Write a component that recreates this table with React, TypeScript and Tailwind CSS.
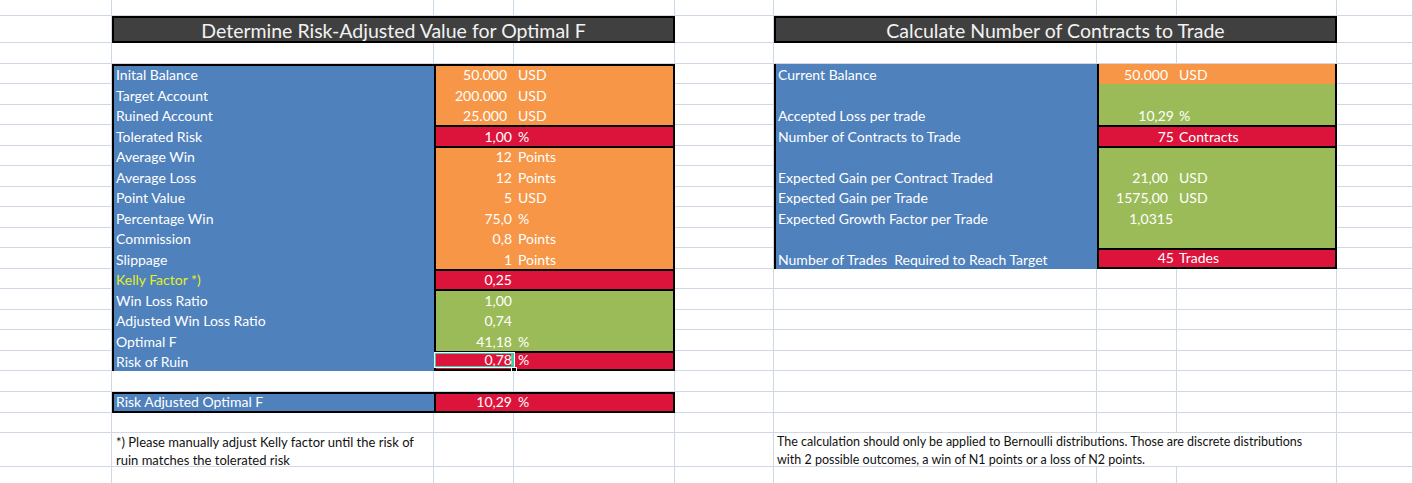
import React from 'react'

// sheet geometry: 9 columns, 23 rows (row heights taken from the screenshot)
const COLS = 9
const ROWS = 23

type Cell = [string, string, string?]

interface Group {
  bg: string
  span: string
  border: string
  rows: Cell[]
  selected?: boolean
}

const leftLabels = [
  'Inital Balance',
  'Target Account',
  'Ruined Account',
  'Tolerated Risk',
  'Average Win',
  'Average Loss',
  'Point Value',
  'Percentage Win',
  'Commission',
  'Slippage',
  'Kelly Factor *)',
  'Win Loss Ratio',
  'Adjusted Win Loss Ratio',
  'Optimal F',
  'Risk of Ruin',
]

const leftGroups: Group[] = [
  {
    bg: 'bg-[#f79646]',
    span: 'row-span-3',
    border: 'border-t-2',
    rows: [
      ['50.000', 'USD', 'pr-[5px]'],
      ['200.000', 'USD', 'pr-[5px]'],
      ['25.000', 'USD', 'pr-[5px]'],
    ],
  },
  { bg: 'bg-[#dc143c]', span: 'row-span-1', border: 'border-t-2', rows: [['1,00', '%']] },
  {
    bg: 'bg-[#f79646]',
    span: 'row-span-6',
    border: 'border-t-2',
    rows: [
      ['12', 'Points'],
      ['12', 'Points'],
      ['5', 'USD'],
      ['75,0', '%'],
      ['0,8', 'Points'],
      ['1', 'Points'],
    ],
  },
  { bg: 'bg-[#dc143c]', span: 'row-span-1', border: 'border-t-2', rows: [['0,25', '']] },
  {
    bg: 'bg-[#9bbb59]',
    span: 'row-span-3',
    border: 'border-t-2',
    rows: [
      ['1,00', ''],
      ['0,74', ''],
      ['41,18', '%'],
    ],
  },
  { bg: 'bg-[#dc143c]', span: 'row-span-1', border: 'border-t-2', rows: [['0,78', '%']], selected: true },
]

const rightLabels = [
  'Current Balance',
  '',
  'Accepted Loss per trade',
  'Number of Contracts to Trade',
  '',
  'Expected Gain per Contract Traded',
  'Expected Gain per Trade',
  'Expected Growth Factor per Trade',
  '',
  'Number of Trades\u00a0 Required to Reach Target',
]

const rightGroups: Group[] = [
  { bg: 'bg-[#f79646]', span: 'row-span-1', border: '', rows: [['50.000', 'USD', 'pr-[6px]']] },
  {
    bg: 'bg-[#9bbb59]',
    span: 'row-span-2',
    border: '',
    rows: [
      ['', ''],
      ['10,29', '%'],
    ],
  },
  { bg: 'bg-[#dc143c]', span: 'row-span-1', border: 'border-t-2', rows: [['75', 'Contracts']] },
  {
    bg: 'bg-[#9bbb59]',
    span: 'row-span-5',
    border: 'border-t-2',
    rows: [
      ['', ''],
      ['21,00', 'USD', 'pr-[6px]'],
      ['1575,00', 'USD', 'pr-[6px]'],
      ['1,0315', '', 'pr-[1px]'],
      ['', ''],
    ],
  },
  { bg: 'bg-[#dc143c]', span: 'row-span-1', border: 'border-t-2', rows: [['45', 'Trades']] },
]

function GridLines() {
  const cells = []
  for (let r = 1; r <= ROWS; r++) {
    for (let c = 1; c <= COLS; c++) {
      cells.push(
        <div
          key={`${r}-${c}`}
          className="border-r border-b border-[#d0d7e5]"
          style={{ gridRow: r, gridColumn: c }}
        />
      )
    }
  }
  return <>{cells}</>
}

function ValueRow({ cell, numWidth, unitPad, selected }: { cell: Cell; numWidth: string; unitPad: string; selected?: boolean }) {
  const [num, unit, pad] = cell
  return (
    <div className="relative flex items-end pb-[1px] leading-[16px] text-white">
      {selected && (
        <>
          <div className="absolute left-[-2px] top-[-1px] bottom-[1px] w-[81px] border border-white">
            <div className="h-full w-full border border-r-[3px] border-[#35d4a8]" />
          </div>
          <div className="absolute left-[75px] bottom-[-3px] h-[5px] w-[6px] border border-white bg-black" />
        </>
      )}
      <span className={`relative ${numWidth} text-right ${pad ?? ''}`}>{num}</span>
      <span className={unitPad}>{unit}</span>
    </div>
  )
}

export default function App() {
  return (
    <div className="h-[483px] w-full overflow-hidden bg-white font-['Lato',sans-serif] text-[14px]">
      <div className="grid grid-cols-[112px_322px_80px_161px_99px_323px_80px_160px_1fr] grid-rows-[16px_27px_21px_repeat(15,20.47px)_20.5px_21px_20.5px_34px_20px]">
        <GridLines />

        {/* titles */}
        <div className="col-start-2 col-span-3 row-start-2 flex items-center justify-center border-2 border-black bg-[#404040] pt-[3px] text-[19.5px] leading-[20px] text-[#f2f2f2]">
          Determine Risk-Adjusted Value for Optimal F
        </div>
        <div className="col-start-6 col-span-3 row-start-2 flex items-center justify-center border-2 border-black bg-[#404040] pt-[3px] text-[19.5px] leading-[20px] text-[#f2f2f2]">
          Calculate Number of Contracts to Trade
        </div>

        {/* left table */}
        <div className="col-start-2 row-start-4 row-span-15 grid grid-rows-subgrid border-l-2 border-t-2 border-black bg-[#4f81bd]">
          {leftLabels.map((label) => (
            <div
              key={label}
              className={`flex items-end pb-[1px] pl-[2px] leading-[16px] ${label.startsWith('Kelly') ? 'text-[#e4ef22]' : 'text-white'}`}
            >
              {label}
            </div>
          ))}
        </div>
        <div className="col-start-3 col-span-2 row-start-4 row-span-15 grid grid-rows-subgrid border-x-2 border-b-2 border-black">
          {leftGroups.map((g, i) => (
            <div key={i} className={`${g.span} ${g.bg} ${g.border} grid grid-rows-subgrid border-black`}>
              {g.rows.map((cell, j) => (
                <ValueRow key={j} cell={cell} numWidth="w-[76px]" unitPad="pl-[6px]" selected={g.selected} />
              ))}
            </div>
          ))}
        </div>

        <div className="col-start-2 row-start-20 flex items-end border-y-2 border-l-2 border-black bg-[#4f81bd] pb-[1px] pl-[2px] leading-[16px] text-white">
          Risk Adjusted Optimal F
        </div>
        <div className="col-start-3 col-span-2 row-start-20 flex items-end border-2 border-black bg-[#dc143c] pb-[1px] leading-[16px] text-white">
          <span className="w-[76px] text-right">10,29</span>
          <span className="pl-[6px]">%</span>
        </div>

        <div className="col-start-2 row-start-22 pl-[4px] text-[13px] leading-[18px] text-[#111]">
          *) Please manually adjust Kelly factor until the risk of ruin matches the tolerated risk
        </div>

        {/* right table */}
        <div className="col-start-6 row-start-4 row-span-10 grid grid-rows-subgrid border-l-2 border-black bg-[#4f81bd]">
          {rightLabels.map((label, i) => (
            <div key={i} className="flex items-end pb-[1px] pl-[2px] leading-[16px] text-white">
              {label}
            </div>
          ))}
        </div>
        <div className="col-start-7 col-span-2 row-start-4 row-span-10 grid grid-rows-subgrid border-x-2 border-b-2 border-black">
          {rightGroups.map((g, i) => (
            <div key={i} className={`${g.span} ${g.bg} ${g.border} grid grid-rows-subgrid border-black`}>
              {g.rows.map((cell, j) => (
                <ValueRow key={j} cell={cell} numWidth="w-[75px]" unitPad="pl-[5px]" />
              ))}
            </div>
          ))}
        </div>

        <div className="col-start-6 col-span-3 row-start-22 border-r border-b border-[#d0d7e5] bg-white pl-[3px] pr-[14px] text-[12.5px] leading-[18px] text-[#111]">
          The calculation should only be applied to Bernoulli distributions. Those are discrete distributions with 2 possible
          outcomes, a win of N1 points or a loss of N2 points.
        </div>
      </div>
    </div>
  )
}
